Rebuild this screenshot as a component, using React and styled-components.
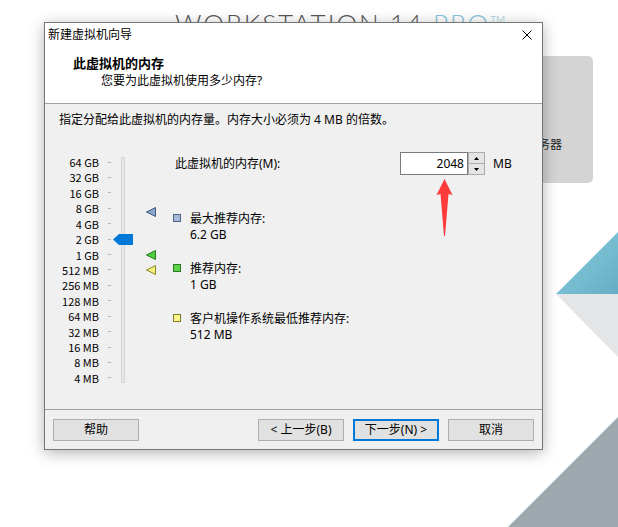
import React from 'react'
import styled, { createGlobalStyle } from 'styled-components'

const GlobalStyle = createGlobalStyle`
  html, body {
    margin: 0;
    padding: 0;
    background: #fff;
  }
  body {
    font-family: "Segoe UI", "Noto Sans", "Noto Sans CJK SC", sans-serif;
    font-size: 12px;
    color: #000;
  }
`

const Desktop = styled.div`
  position: relative;
  width: 618px;
  height: 527px;
  overflow: hidden;
  background: #fff;
`

const Brand = styled.div`
  position: absolute;
  left: 175px;
  top: 9px;
  font-family: Lato, "Open Sans", sans-serif;
  font-weight: 300;
  font-size: 26px;
  line-height: 28px;
  letter-spacing: 2px;
  color: #555;
  white-space: nowrap;
`

const Pro = styled.span`
  color: #86c6da;
`

const Tm = styled.span`
  display: inline-block;
  vertical-align: top;
  font-size: 10px;
  line-height: 12px;
  margin-top: 4px;
  letter-spacing: 0;
`

const SidePanel = styled.div`
  position: absolute;
  left: 470px;
  top: 56px;
  width: 123px;
  height: 127px;
  box-sizing: border-box;
  background: #d4d4d4;
  border-radius: 0 5px 5px 0;
  display: flex;
  align-items: flex-end;
  justify-content: flex-end;
  padding: 0 31px 30px 0;
  line-height: 16px;
  font-size: 12px;
  color: #222;
`

const Shapes = styled.svg`
  position: absolute;
  left: 0;
  top: 0;
  pointer-events: none;
`

const Dialog = styled.div`
  position: absolute;
  left: 44px;
  top: 22px;
  width: 499px;
  height: 428px;
  box-sizing: border-box;
  border: 1px solid #767676;
  background: #f0f0f0;
  box-shadow: 0 3px 14px rgba(0, 0, 0, 0.3);
  display: flex;
  flex-direction: column;
`

const TitleBar = styled.div`
  height: 23px;
  background: #fff;
  display: flex;
  align-items: center;
  justify-content: space-between;
  padding: 0 10px 0 3px;
  line-height: 16px;
`

const Header = styled.div`
  height: 58px;
  box-sizing: border-box;
  background: #fff;
  padding: 8px 0 0 28px;
  border-bottom: 1px solid #a0a0a0;
`

const HeaderTitle = styled.div`
  font-weight: 700;
  font-size: 13px;
  line-height: 18px;
`

const HeaderSub = styled.div`
  line-height: 18px;
  padding-left: 28px;
`

const Body = styled.div`
  flex: 1;
  padding: 8px 0 0 14px;
  border-bottom: 1px solid #a0a0a0;
`

const Intro = styled.div`
  line-height: 16px;
`

const Content = styled.div`
  display: flex;
  margin-top: 24px;
`

const Scale = styled.div`
  display: flex;
  align-items: flex-start;
`

const Labels = styled.div`
  width: 40px;
  height: 228px;
  margin-top: 4px;
  display: flex;
  flex-direction: column;
  justify-content: space-between;
  text-align: right;
  font-family: "Noto Sans CJK SC", "Noto Sans", sans-serif;
  font-size: 11px;
`

const Label = styled.div`
  height: 12px;
  line-height: 12px;
  white-space: nowrap;
`

const Ticks = styled(Labels)`
  width: 3px;
  margin-left: 9px;
`

const Tick = styled.div`
  height: 12px;
  display: flex;
  align-items: center;
  &::after {
    content: '';
    display: block;
    width: 3px;
    height: 1px;
    background: #b4b4b4;
  }
`

const TrackArea = styled.div`
  position: relative;
  width: 4px;
  height: 232px;
  margin-left: 10px;
`

const Track = styled.div`
  margin-top: 5px;
  height: 226px;
  box-sizing: border-box;
  background: #e7e7e7;
  border: 1px solid #d6d6d6;
`

const Thumb = styled.div`
  position: absolute;
  left: -8px;
  top: 82px;
  width: 20px;
  height: 11px;
  background: #0078d7;
  clip-path: polygon(0 50%, 30% 0, 100% 0, 100% 100%, 30% 100%);
`

const Markers = styled.div`
  position: relative;
  width: 10px;
  height: 232px;
  margin-left: 21px;
`

const Marker = styled.svg`
  position: absolute;
  left: 0;
  top: ${p => p.$top}px;
`

const Details = styled.div`
  margin-left: 17px;
  display: flex;
  flex-direction: column;
`

const MemoryRow = styled.div`
  display: flex;
  align-items: center;
  height: 23px;
`

const MemoryLabel = styled.div`
  width: 227px;
  padding-left: 2px;
  box-sizing: border-box;
  line-height: 16px;
`

const Input = styled.div`
  width: 68px;
  height: 23px;
  box-sizing: border-box;
  border: 1px solid #7a7a7a;
  background: #fff;
  text-align: right;
  padding-right: 3px;
  line-height: 21px;
`

const Spinner = styled.div`
  width: 17px;
  height: 23px;
  display: flex;
  flex-direction: column;
`

const SpinButton = styled.div`
  flex: 1;
  box-sizing: border-box;
  border: 1px solid #adadad;
  border-top-width: ${p => (p.$down ? 0 : 1)}px;
  background: #e5e5e5;
  display: flex;
  align-items: center;
  justify-content: center;
`

const Unit = styled.div`
  margin-left: 8px;
  line-height: 16px;
`

const Legend = styled.div`
  margin-top: 36px;
  display: flex;
  flex-direction: column;
  gap: 18px;
`

const LegendItem = styled.div`
  display: flex;
  align-items: flex-start;
`

const Swatch = styled.div`
  width: 8px;
  height: 8px;
  box-sizing: border-box;
  margin-top: 3px;
  margin-right: 9px;
  border: 1px solid ${p => p.$edge};
  background: ${p => p.$fill};
`

const LegendText = styled.div`
  line-height: 16px;
`

const Footer = styled.div`
  height: 39px;
  box-sizing: border-box;
  padding: 9px 8px 0 8px;
  display: flex;
  align-items: flex-start;
  gap: 9px;
`

const Button = styled.div`
  width: 86px;
  height: 22px;
  box-sizing: border-box;
  border: ${p => (p.$primary ? '2px solid #0078d7' : '1px solid #adadad')};
  background: #e1e1e1;
  display: flex;
  align-items: center;
  justify-content: center;
  line-height: 16px;
  white-space: nowrap;
  margin-left: ${p => (p.$push ? 'auto' : '0')};
`

const Arrow = styled.svg`
  position: absolute;
  left: 436px;
  top: 178px;
`

const scale = [
  '64 GB', '32 GB', '16 GB', '8 GB', '4 GB', '2 GB', '1 GB',
  '512 MB', '256 MB', '128 MB', '64 MB', '32 MB', '16 MB', '8 MB', '4 MB',
]

const markers = [
  { top: 55, fill: '#8ea6cc', edge: '#3f5a86' },
  { top: 98, fill: '#4fcf3f', edge: '#237d1c' },
  { top: 113, fill: '#f3f07a', edge: '#8a8528' },
]

const legend = [
  { title: '最大推荐内存:', value: '6.2 GB', fill: '#a7b9d6', edge: '#4d6384' },
  { title: '推荐内存:', value: '1 GB', fill: '#5ed14b', edge: '#2b7a22' },
  { title: '客户机操作系统最低推荐内存:', value: '512 MB', fill: '#f7f58c', edge: '#7f7b2a' },
]

function App() {
  return (
    <>
      <GlobalStyle />
      <Desktop>
        <Brand>
          WORKSTATION 14 <Pro>PRO<Tm>TM</Tm></Pro>
        </Brand>
        <SidePanel>连接远程服务器</SidePanel>
        <Shapes width="618" height="527" viewBox="0 0 618 527">
          <defs>
            <linearGradient id="blueFace" x1="0" y1="0" x2="1" y2="1">
              <stop offset="0" stopColor="#8fd0e2" />
              <stop offset="1" stopColor="#63adc4" />
            </linearGradient>
          </defs>
          <polygon points="556,294 618,232 618,294" fill="url(#blueFace)" />
          <polygon points="556,294 618,294 618,357" fill="#e4e5e7" />
          <polygon points="508,527 618,417 618,527" fill="#9da8ae" />
        </Shapes>

        <Dialog>
          <TitleBar>
            <span>新建虚拟机向导</span>
            <svg width="10" height="10" viewBox="0 0 10 10">
              <path d="M0.5 0.5 L9.5 9.5 M9.5 0.5 L0.5 9.5" stroke="#000" strokeWidth="1" />
            </svg>
          </TitleBar>
          <Header>
            <HeaderTitle>此虚拟机的内存</HeaderTitle>
            <HeaderSub>您要为此虚拟机使用多少内存?</HeaderSub>
          </Header>
          <Body>
            <Intro>指定分配给此虚拟机的内存量。内存大小必须为 4 MB 的倍数。</Intro>
            <Content>
              <Scale>
                <Labels>
                  {scale.map(s => <Label key={s}>{s}</Label>)}
                </Labels>
                <Ticks>
                  {scale.map(s => <Tick key={s} />)}
                </Ticks>
                <TrackArea>
                  <Track />
                  <Thumb />
                </TrackArea>
                <Markers>
                  {markers.map(m => (
                    <Marker key={m.top} $top={m.top} width="10" height="10" viewBox="0 0 10 10">
                      <polygon points="0.5,5 9.5,0.5 9.5,9.5" fill={m.fill} stroke={m.edge} strokeWidth="1" />
                    </Marker>
                  ))}
                </Markers>
              </Scale>
              <Details>
                <MemoryRow>
                  <MemoryLabel>此虚拟机的内存(M):</MemoryLabel>
                  <Input>2048</Input>
                  <Spinner>
                    <SpinButton>
                      <svg width="5" height="3" viewBox="0 0 5 3"><polygon points="0,3 2.5,0 5,3" fill="#000" /></svg>
                    </SpinButton>
                    <SpinButton $down>
                      <svg width="5" height="3" viewBox="0 0 5 3"><polygon points="0,0 5,0 2.5,3" fill="#000" /></svg>
                    </SpinButton>
                  </Spinner>
                  <Unit>MB</Unit>
                </MemoryRow>
                <Legend>
                  {legend.map(l => (
                    <LegendItem key={l.title}>
                      <Swatch $fill={l.fill} $edge={l.edge} />
                      <LegendText>
                        <div>{l.title}</div>
                        <div>{l.value}</div>
                      </LegendText>
                    </LegendItem>
                  ))}
                </Legend>
              </Details>
            </Content>
          </Body>
          <Footer>
            <Button>帮助</Button>
            <Button $push>&lt; 上一步(B)</Button>
            <Button $primary>下一步(N) &gt;</Button>
            <Button>取消</Button>
          </Footer>
        </Dialog>

        <Arrow width="18" height="60" viewBox="0 0 18 60">
          <path d="M8.5 1 L16.5 17 L12.5 16 L9 58 L8 58 L4.5 16 L0.5 17 Z" fill="#ff3a3a" />
        </Arrow>
      </Desktop>
    </>
  )
}

export default App
